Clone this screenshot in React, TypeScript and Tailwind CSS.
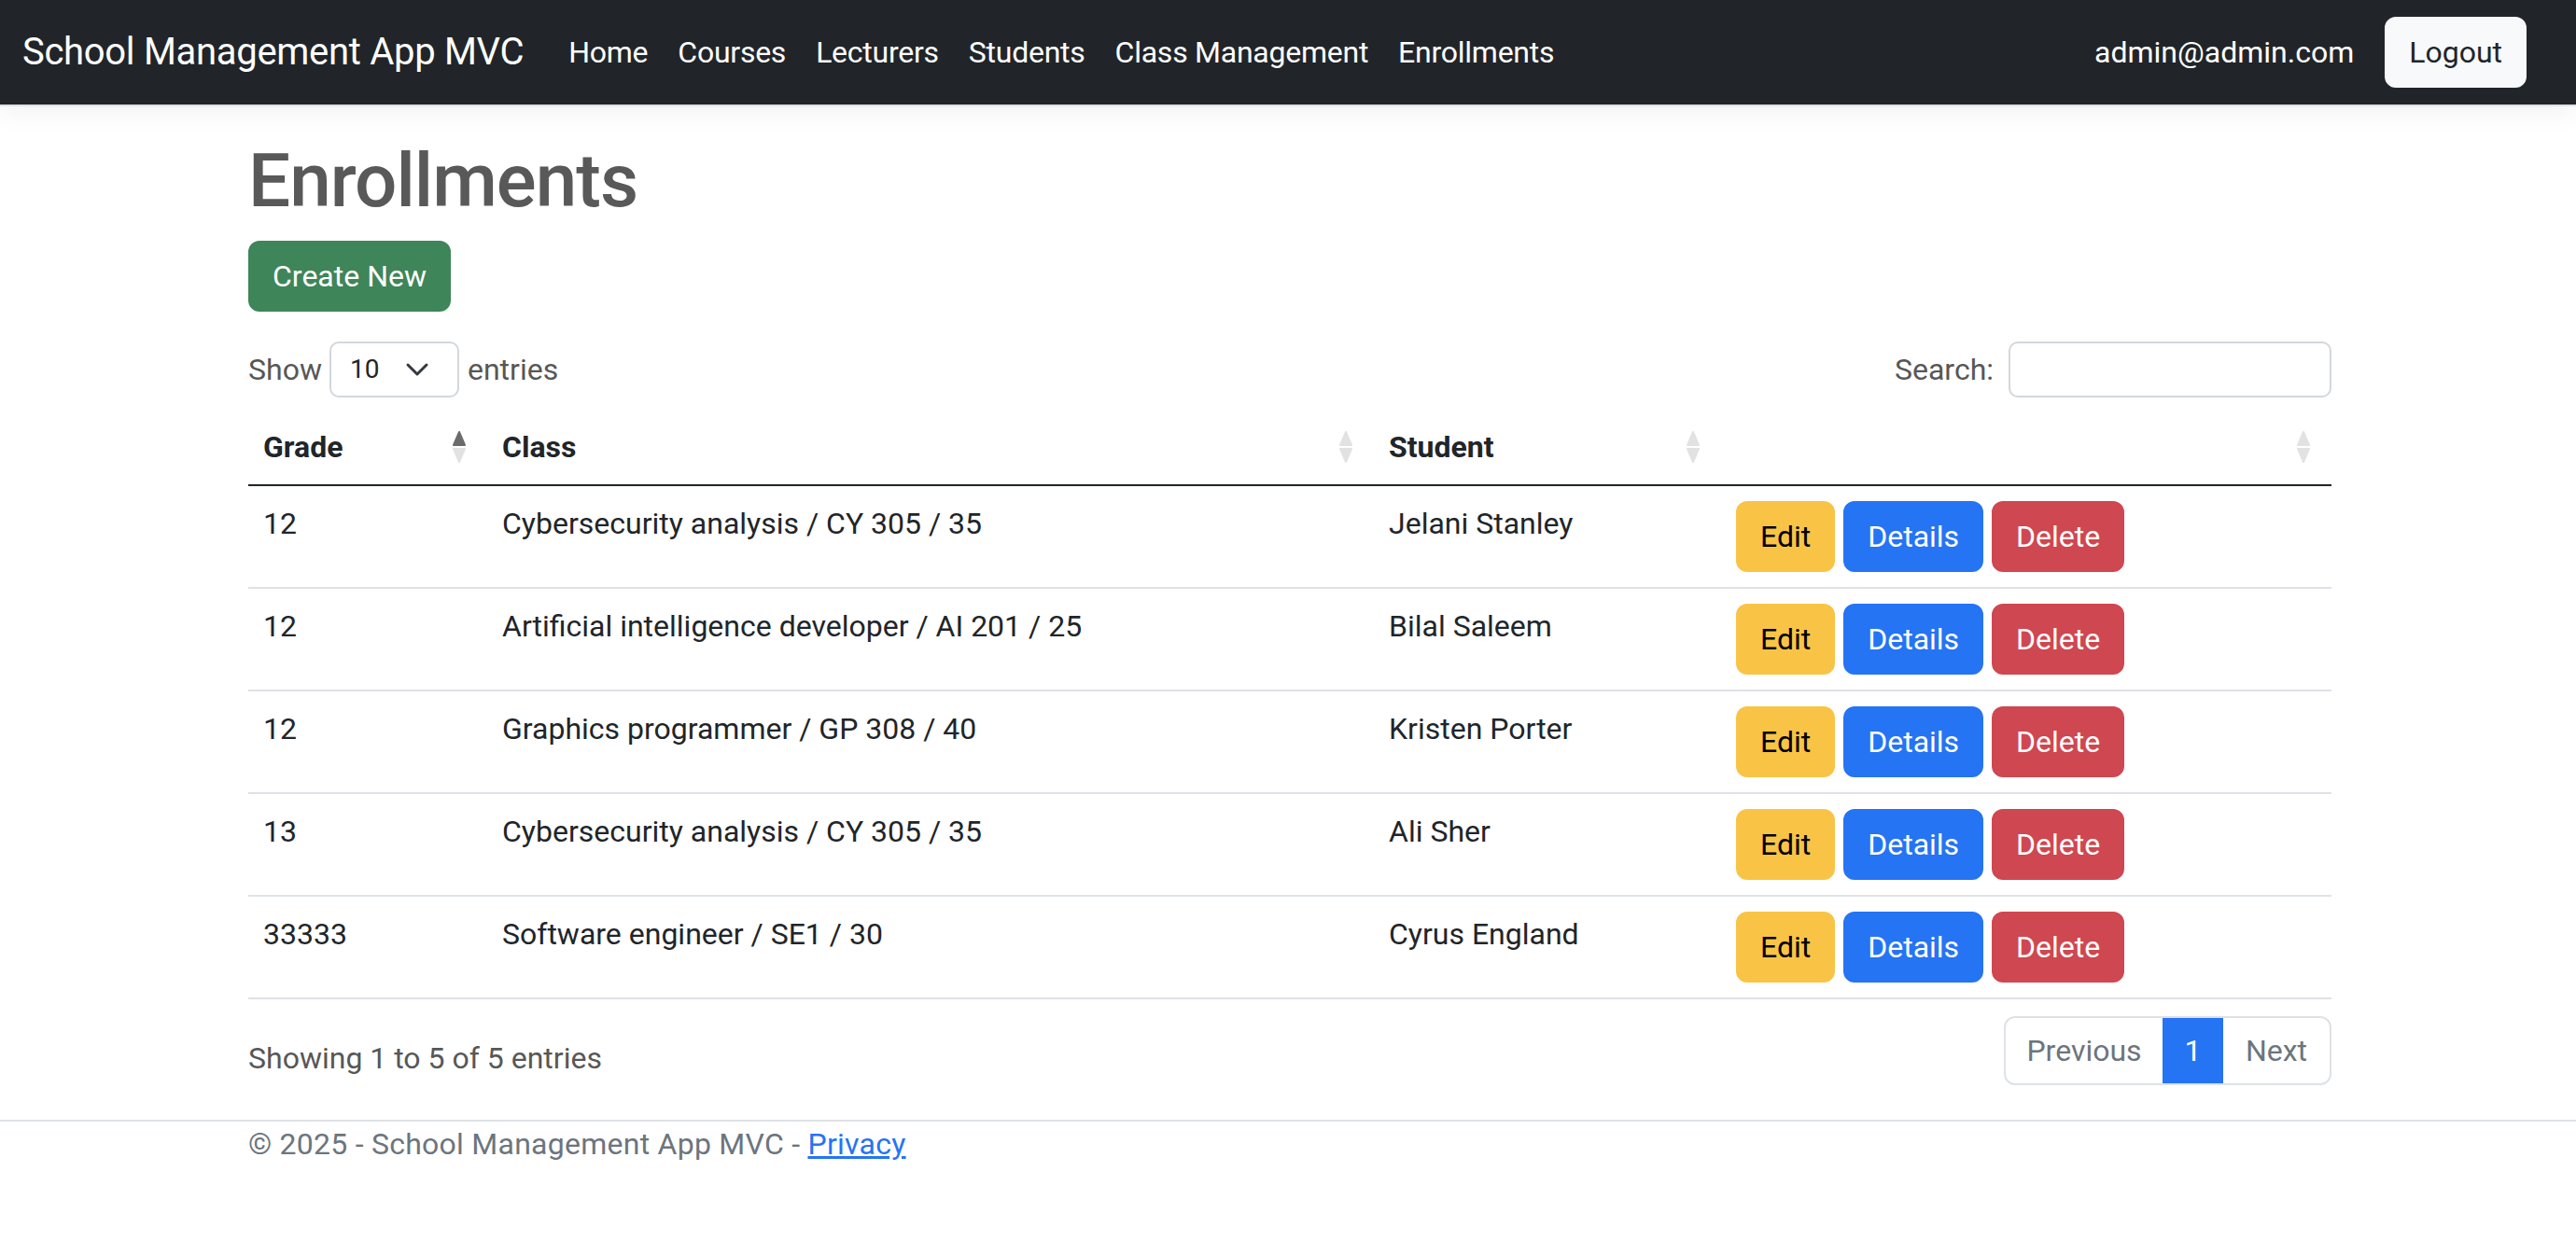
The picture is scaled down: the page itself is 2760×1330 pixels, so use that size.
import React from 'react';

const rows = [
  { grade: '12', cls: 'Cybersecurity analysis / CY 305 / 35', student: 'Jelani Stanley' },
  { grade: '12', cls: 'Artificial intelligence developer / AI 201 / 25', student: 'Bilal Saleem' },
  { grade: '12', cls: 'Graphics programmer / GP 308 / 40', student: 'Kristen Porter' },
  { grade: '13', cls: 'Cybersecurity analysis / CY 305 / 35', student: 'Ali Sher' },
  { grade: '33333', cls: 'Software engineer / SE1 / 30', student: 'Cyrus England' },
];

function SortIcon({ active }: { active?: boolean }) {
  return (
    <svg className="absolute right-[22px] top-1/2 -translate-y-1/2" width="16" height="36" viewBox="0 0 16 36">
      <polygon
        points="8,2 14,16 2,16"
        fill={active ? '#6b6b6b' : '#e2e2e2'}
        stroke={active ? '#6b6b6b' : '#e2e2e2'}
        strokeWidth="2"
        strokeLinejoin="round"
      />
      <polygon points="2,20 14,20 8,34" fill="#e2e2e2" stroke="#e2e2e2" strokeWidth="2" strokeLinejoin="round" />
    </svg>
  );
}

function NavBar() {
  return (
    <nav className="h-[112px] bg-[#212529] flex items-center pl-[24px] pr-[53px] text-white border-b-2 border-[#dee2e6] box-content shadow-[0_8px_24px_rgba(0,0,0,0.05)]">
      <span className="text-[40px] leading-[60px] mr-[32px] tracking-[-0.3px]">School Management App MVC</span>
      <ul className="flex items-center text-[32px] leading-[48px] tracking-[-0.25px]">
        {['Home', 'Courses', 'Lecturers', 'Students', 'Class Management', 'Enrollments'].map((l) => (
          <li key={l} className="px-[16px]">
            {l}
          </li>
        ))}
      </ul>
      <div className="ml-auto flex items-center gap-[33px]">
        <span className="text-[32px] leading-[48px]">admin@admin.com</span>
        <button className="bg-[#f8f9fa] text-[#212529] text-[32px] leading-[48px] px-[24px] py-[12px] rounded-[12px] border-2 border-[#f8f9fa]">
          Logout
        </button>
      </div>
    </nav>
  );
}

export default function App() {
  return (
    <div className="relative min-h-[1330px] bg-white font-['Roboto',sans-serif] text-[#212529]">
      <NavBar />

      <main className="mx-auto w-[2280px] pl-[26px] pr-[22px] pt-[32px]">
        <h1 className="text-[80px] leading-[96px] font-medium text-[#595959] mb-[16px] tracking-[-1px]">Enrollments</h1>
        <div className="mb-[32px]">
          <button className="bg-[#3e8559] text-white text-[32px] leading-[48px] px-[24px] py-[12px] rounded-[12px] border-2 border-[#3e8559]">
            Create New
          </button>
        </div>

        {/* length + search */}
        <div className="flex items-center justify-between h-[60px] text-[32px] text-[#575757]">
          <div className="flex items-center">
            <span>Show</span>
            <div className="ml-[8px] mr-[9px] w-[139px] h-[60px] border-2 border-[#d3d7dc] rounded-[10px] flex items-center justify-between pl-[20px] pr-[30px] text-[#212529] text-[28px]">
              <span>10</span>
              <svg width="26" height="16" viewBox="0 0 26 16">
                <polyline points="3,3 13,13 23,3" fill="none" stroke="#343a40" strokeWidth="3" strokeLinecap="round" strokeLinejoin="round" />
              </svg>
            </div>
            <span>entries</span>
          </div>
          <div className="flex items-center gap-[16px]">
            <span>Search:</span>
            <div className="w-[346px] h-[60px] border-2 border-[#d3d7dc] rounded-[10px]" />
          </div>
        </div>

        <table className="mt-[13px] w-full table-fixed border-collapse text-[32px] leading-[48px]">
          <colgroup>
            <col className="w-[256px]" />
            <col className="w-[950px]" />
            <col className="w-[372px]" />
            <col className="w-[654px]" />
          </colgroup>
          <thead>
            <tr className="border-b-2 border-[#212529]">
              <th className="relative text-left font-bold p-[16px]">
                Grade
                <SortIcon active />
              </th>
              <th className="relative text-left font-bold p-[16px]">
                Class
                <SortIcon />
              </th>
              <th className="relative text-left font-bold p-[16px]">
                Student
                <SortIcon />
              </th>
              <th className="relative text-left font-bold p-[16px]">
                <SortIcon />
              </th>
            </tr>
          </thead>
          <tbody>
            {rows.map((r, i) => (
              <tr key={i} className="border-b-2 border-[#dee2e6]">
                <td className="align-top p-[16px]">{r.grade}</td>
                <td className="align-top p-[16px]">{r.cls}</td>
                <td className="align-top p-[16px]">{r.student}</td>
                <td className="align-top p-[16px]">
                  <div className="flex gap-[9px]">
                    <button className="bg-[#f9c446] text-black px-[24px] py-[12px] rounded-[12px] border-2 border-[#f9c446]">Edit</button>
                    <button className="bg-[#2574f3] text-white px-[24px] py-[12px] rounded-[12px] border-2 border-[#2574f3]">Details</button>
                    <button className="bg-[#cf4750] text-white px-[24px] py-[12px] rounded-[12px] border-2 border-[#cf4750]">Delete</button>
                  </div>
                </td>
              </tr>
            ))}
          </tbody>
        </table>

        {/* info + paging */}
        <div className="flex items-center justify-between mt-[18px] h-[74px] text-[32px]">
          <span className="text-[#575757] pt-[16px]">Showing 1 to 5 of 5 entries</span>
          <div className="flex h-[74px] border-2 border-[#dee2e6] rounded-[12px] overflow-hidden text-[#6c757d]">
            <span className="w-[168px] flex items-center justify-center">Previous</span>
            <span className="w-[65px] flex items-center justify-center bg-[#2574f3] text-white">1</span>
            <span className="w-[114px] flex items-center justify-center">Next</span>
          </div>
        </div>
      </main>

      <footer className="mt-[37px] border-t-2 border-[#dee2e6]">
        <div className="mx-auto w-[2280px] pl-[26px] pr-[22px] text-[32px] leading-[48px] text-[#6c757d] tracking-[0.25px]">
          © 2025 - School Management App MVC - <span className="text-[#2574f3] underline">Privacy</span>
        </div>
      </footer>
    </div>
  );
}
